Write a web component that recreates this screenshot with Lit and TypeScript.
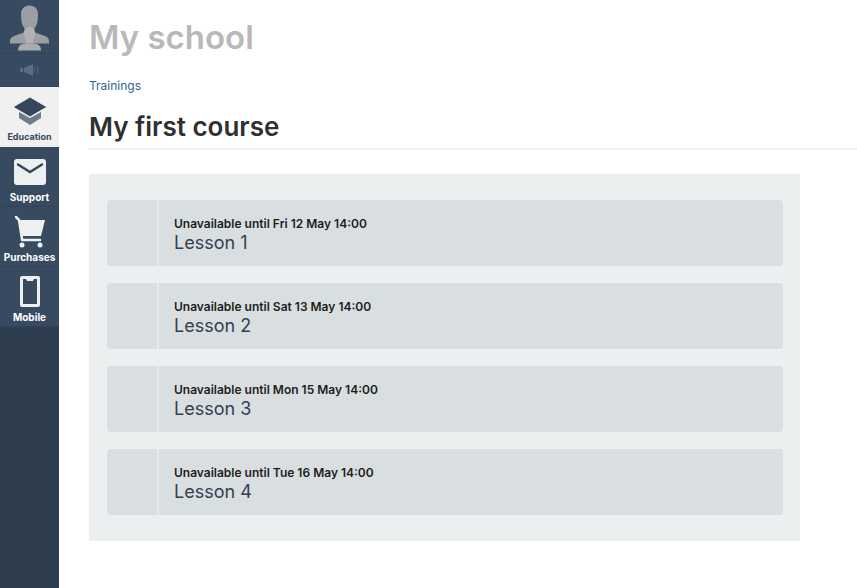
import { LitElement, html, css, svg } from "lit";
import { customElement, property } from "lit/decorators.js";
import { classMap } from "lit/directives/class-map.js";

const icons = {
  avatar: svg`<svg width="40" height="46" viewBox="0 0 40 46" aria-hidden="true">
    <path fill="#9b9fa4" d="M19.500 0.500C25 0.500 28 4 28 9.500L27.500 17Q26.500 21 24.500 23V26Q25 28 28 28.500L35 31Q39 32.500 39 36V38.500H0V36Q0 32.500 4 31L11 28.500Q14 28 14.500 26V23Q12.500 21 11.500 17L11 9.500C11 4 14 0.500 19.500 0.500Z"/>
    <path fill="#b0b2b4" d="M19.500 22C23 22 25 24.500 25 29Q25 33 23 36V38.500H16V36Q14 33 14 29C14 24.500 16 22 19.500 22Z"/>
    <path fill="#a9acaf" d="M14.500 38.500H24.500L28 39.500Q31 41 31 45.500H8Q8 41 11 39.500Z"/>
  </svg>`,
  horn: svg`<svg width="19" height="12" viewBox="0 0 19 12" aria-hidden="true">
    <path fill="#5a6c83" d="M0 4h3v4H0zM4 4L13 0V12L4 8z"/>
    <path fill="none" stroke="#485c74" stroke-width="1.500" d="M14.500 3.500V8.500M17 2Q18.500 6 17 10"/>
  </svg>`,
  education: svg`<svg width="34" height="30" viewBox="0 0 34 30" aria-hidden="true">
    <path fill="#6d7b8c" d="M6 15L17 21L28 15V21L17 28L6 21Z"/>
    <path fill="#34475c" stroke="#f0f0f0" d="M0 10L17 0L34 10L17 20Z"/>
  </svg>`,
  support: svg`<svg width="34" height="28" viewBox="0 0 34 28" aria-hidden="true">
    <rect x="1" y="1" width="32" height="26" rx="3" fill="#ecf0f1"/>
    <path fill="none" stroke="#34475c" stroke-width="2.500" stroke-linecap="round" d="M5 6.500L17 14L29 6.500"/>
  </svg>`,
  purchases: svg`<svg width="34" height="34" viewBox="0 0 34 34" aria-hidden="true">
    <path fill="#ecf0f1" d="M6 5H32L28 21H9Z"/>
    <path fill="none" stroke="#ecf0f1" stroke-width="2.500" stroke-linecap="round" stroke-linejoin="round" d="M3 2L6 5L9 24V25H27"/>
    <circle cx="9" cy="30" r="2.500" fill="#ecf0f1"/><circle cx="27" cy="30" r="2.500" fill="#ecf0f1"/>
  </svg>`,
  mobile: svg`<svg width="22" height="32" viewBox="0 0 22 32" aria-hidden="true">
    <path fill="#ecf0f1" fill-rule="evenodd" d="M3 0H19Q21 0 21 2V29Q21 31 19 31H3Q1 31 1 29V2Q1 0 3 0ZM4 3V28H18V3H15L14 5H8L7 3Z"/>
  </svg>`,
};

@customElement("side-nav")
class SideNav extends LitElement {
  static styles = css`
    :host { display: block; background: #2f3e4e; }
    nav { display: flex; flex-direction: column; }
    a {
      box-sizing: border-box; display: flex; flex-direction: column; align-items: center;
      background: #374a60; color: #fff; text-decoration: none;
      border-bottom: 1px solid #31435a;
    }
    .profile { height: 54px; padding-top: 5px; }
    .news { height: 33px; justify-content: center; }
    .item { height: 60px; padding-top: 7px; font-size: 10px; line-height: 14px; font-weight: 700; }
    .active { background: #f0f0f0; color: #34475c; font-size: 9px; border-bottom-color: #f0f0f0; }
    .icon { display: flex; align-items: center; justify-content: center; height: 36px; }
  `;

  render() {
    const items = [
      { label: "Education", icon: icons.education, active: true },
      { label: "Support", icon: icons.support, active: false },
      { label: "Purchases", icon: icons.purchases, active: false },
      { label: "Mobile", icon: icons.mobile, active: false },
    ];
    return html`<nav aria-label="Main">
      <a class="profile" href="#profile" aria-label="Profile">${icons.avatar}</a>
      <a class="news" href="#news" aria-label="Announcements">${icons.horn}</a>
      ${items.map(i => html`<a class=${classMap({ item: true, active: i.active })} href="#${i.label.toLowerCase()}">
        <span class="icon">${i.icon}</span><span>${i.label}</span>
      </a>`)}
    </nav>`;
  }
}

@customElement("lesson-row")
class LessonRow extends LitElement {
  @property() when = "";
  @property() name = "";

  static styles = css`
    :host { display: flex; min-height: 66px; background: #d9dee1; border-radius: 4px; overflow: hidden; }
    .mark { width: 50px; border-right: 2px solid #e4e9eb; }
    .text { display: flex; flex-direction: column; padding: 16px 15px 12px; }
    .when { font-size: 12px; line-height: 16px; font-weight: 600; color: #1c1e20; }
    .name { font-size: 18px; line-height: 22px; color: #34404f; }
  `;

  render() {
    return html`<div class="mark"></div>
      <div class="text"><span class="when">${this.when}</span><span class="name">${this.name}</span></div>`;
  }
}

@customElement("app-root")
class AppRoot extends LitElement {
  static styles = css`
    :host {
      display: grid; grid-template-columns: 59px 1fr; min-height: 100vh;
      background: #fff; font-family: Inter, "Liberation Sans", sans-serif;
    }
    main { padding: 14px 0 46px 30px; }
    h1, h2 { margin: 0; }
    h1 { font-size: 33px; line-height: 46px; font-weight: 600; color: #b9b9b9; }
    .crumbs { display: flex; margin-top: 16px; font-size: 12px; line-height: 20px; }
    .crumbs a { color: #2f6398; text-decoration: none; }
    h2 {
      margin-top: 13px; padding-bottom: 3px; font-size: 26px; line-height: 36px;
      font-weight: 600; color: #303030; border-bottom: 2px solid #f2f2f2;
    }
    .lessons {
      display: flex; flex-direction: column; gap: 17px;
      margin: 24px 57px 0 0; padding: 26px 17px 26px 18px; background: #ebeff0;
    }
  `;

  render() {
    const lessons = ["Fri 12", "Sat 13", "Mon 15", "Tue 16"];
    return html`<side-nav></side-nav>
      <main>
        <h1>My school</h1>
        <div class="crumbs"><a href="#trainings">Trainings</a></div>
        <h2>My first course</h2>
        <section class="lessons" aria-label="Lessons">
          ${lessons.map((day, i) => html`<lesson-row
            when=${`Unavailable until ${day} May 14:00`} name=${`Lesson ${i + 1}`}></lesson-row>`)}
        </section>
      </main>`;
  }
}
